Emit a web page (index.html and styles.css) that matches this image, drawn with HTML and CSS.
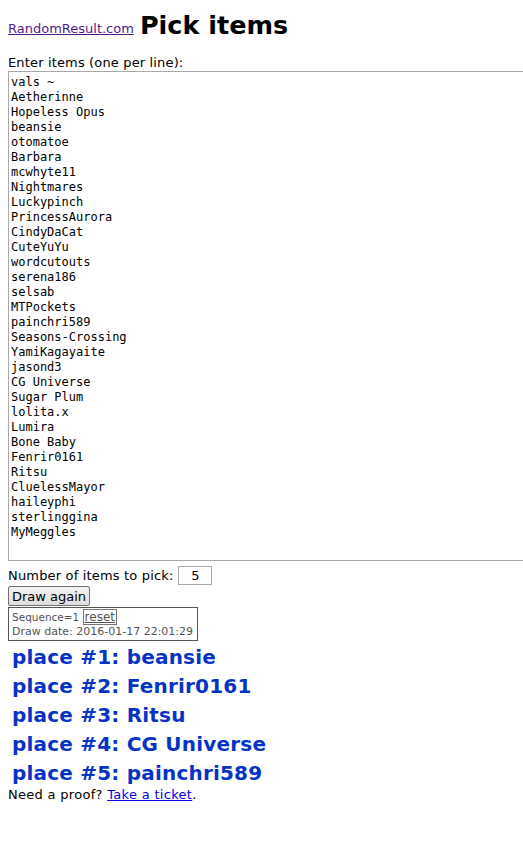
FILE: index.html
```
<!DOCTYPE html>
<html>
<head>
<meta charset="utf-8">
<link rel="stylesheet" href="styles.css">
</head>
<body>
<div class="header"><a class="site" href="#">RandomResult.com</a> <h1 class="title">Pick items</h1></div>
<div class="label">Enter items (one per line):</div>
<textarea class="items">vals ~
Aetherinne
Hopeless Opus
beansie
otomatoe
Barbara
mcwhyte11
Nightmares
Luckypinch
PrincessAurora
CindyDaCat
CuteYuYu
wordcutouts
serena186
selsab
MTPockets
painchri589
Seasons-Crossing
YamiKagayaite
jasond3
CG Universe
Sugar Plum
lolita.x
Lumira
Bone Baby
Fenrir0161
Ritsu
CluelessMayor
haileyphi
sterlinggina
MyMeggles</textarea>
<div class="count"><span class="counttext">Number of items to pick:</span><input class="num" type="text" value="5"></div>
<div class="btnrow"><button class="draw">Draw again</button></div>
<div class="seq">
  <div class="seqline">Sequence=1 <a class="reset" href="#">reset</a></div>
  <div class="dateline">Draw date: 2016-01-17 22:01:29</div>
</div>
<div class="results">
  <div class="place">place #1: beansie</div>
  <div class="place">place #2: Fenrir0161</div>
  <div class="place">place #3: Ritsu</div>
  <div class="place">place #4: CG Universe</div>
  <div class="place">place #5: painchri589</div>
</div>
<div class="proof">Need a proof? <a class="ticket" href="#">Take a ticket</a>.</div>
</body>
</html>
```
FILE: styles.css
```
html, body { margin: 0; padding: 0; background: #fff; }
body {
  padding: 0 8px;
  font-family: "DejaVu Sans", Verdana, sans-serif;
  font-size: 13px;
  color: #000;
  width: 700px;
}
.header {
  height: 47px;
  display: flex;
  align-items: flex-end;
}
.site {
  color: #551a8b;
  font-size: 13px;
  line-height: 16px;
  margin-bottom: 10px;
}
.title {
  margin: 0 0 7px 6px;
  font-size: 25.5px;
  font-weight: bold;
  line-height: 30px;
}
.label {
  line-height: 16px;
  height: 16px;
  margin-top: 8px;
  letter-spacing: 0.15px;
}
.items {
  display: block;
  box-sizing: border-box;
  width: 600px;
  height: 490px;
  margin: 0;
  padding: 3px 2px;
  border: 1px solid #a9a9a9;
  font-family: "DejaVu Sans Mono", monospace;
  font-size: 12px;
  line-height: 15px;
  resize: none;
  color: #000;
}
.count {
  margin-top: 4px;
  height: 20px;
  display: flex;
  align-items: center;
}
.counttext { letter-spacing: 0.17px; }
.num {
  box-sizing: border-box;
  width: 34px;
  height: 19px;
  margin: 0 0 0 5px;
  padding: 0;
  border: 1px solid #a9a9a9;
  font-family: "DejaVu Sans", sans-serif;
  font-size: 13px;
  text-align: center;
}
.btnrow { margin-top: 1px; height: 20px; }
.draw {
  box-sizing: border-box;
  height: 20px;
  width: 82px;
  padding: 0;
  margin: 0;
  font-family: "DejaVu Sans", sans-serif;
  font-size: 13px;
  background: linear-gradient(#f2f2f2, #dddddd);
  border: 1px solid #707070;
  border-radius: 2px;
  color: #000;
}
.seq {
  margin-top: 1px;
  box-sizing: border-box;
  width: 190px;
  height: 34px;
  border: 1px solid #555;
  padding: 2px 0 0 3px;
  font-size: 10.5px;
  color: #555;
  white-space: nowrap;
  overflow: hidden;
}
.seqline { line-height: 15px; height: 15px; }
.reset {
  color: #555;
  font-size: 12px;
  border: 1px solid #777;
  padding: 0 1px;
}
.dateline { font-size: 11px; line-height: 14px; }
.results { margin-top: 2px; padding-left: 4px; }
.place {
  font-size: 20px;
  font-weight: bold;
  color: #0533c5;
  line-height: 29px;
  height: 29px;
  letter-spacing: 0.2px;
}
.proof { line-height: 16px; margin-top: -1px; letter-spacing: 0.3px; }
.ticket { color: #0000ee; }
```
